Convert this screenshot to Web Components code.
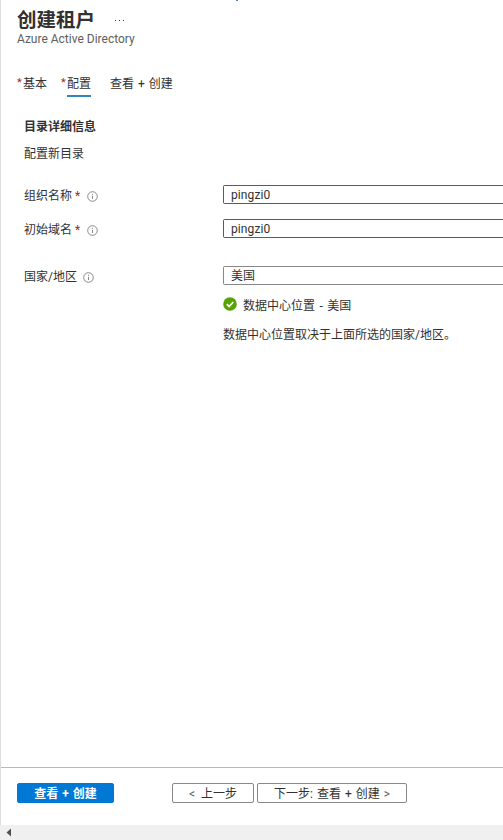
<!DOCTYPE html>
<html lang="zh">
<head>
<meta charset="utf-8">
<title>创建租户</title>
<style>
  html, body { margin: 0; height: 100%; overflow: hidden; background: #fff; }
  body { font-family: Roboto, "Noto Sans CJK SC", sans-serif; color: #323130; }
</style>
</head>
<body>
<tenant-page>
  <blade-header slot="header" title="创建租户" subtitle="Azure Active Directory"></blade-header>
  <wizard-tabs slot="header"></wizard-tabs>
  <section-text slot="body" heading="目录详细信息" text="配置新目录"></section-text>
  <form-row slot="body" label="组织名称" required value="pingzi0" icon-gap="7"></form-row>
  <form-row slot="body" label="初始域名" required value="pingzi0" icon-gap="7"></form-row>
  <form-row slot="body" label="国家/地区" value="美国" kind="select" icon-gap="6"></form-row>
  <location-note slot="body" status="数据中心位置 - 美国" note="数据中心位置取决于上面所选的国家/地区。"></location-note>
  <footer-bar slot="footer"></footer-bar>
</tenant-page>

<script>
const FONT = `Roboto, "Noto Sans CJK SC", sans-serif`;

class TenantPage extends HTMLElement {
  constructor() {
    super();
    this.attachShadow({ mode: 'open' });
  }
  connectedCallback() {
    this.shadowRoot.innerHTML = `
      <style>
        :host { display: flex; flex-direction: column; position: relative; width: 503px; height: 840px; overflow: hidden; font-family: ${FONT}; }
        .content { flex: 1; min-height: 0; display: flex; flex-direction: column; border-left: 1px solid #dcdcdc; padding-left: 16px; overflow: hidden; }
        .body { padding-left: 7px; }
        .speck { position: absolute; left: 236px; top: 0; width: 2px; height: 1px; background: #5a7fb0; }
        .bar { height: 15px; flex: none; background: #f0f0f0; display: flex; align-items: center; padding-left: 6px; }
        .bar svg { display: block; }
      </style>
      <div class="speck"></div>
      <div class="content">
        <slot name="header"></slot>
        <div class="body"><slot name="body"></slot></div>
        <div style="flex:1"></div>
        <slot name="footer"></slot>
      </div>
      <div class="bar"><svg width="6" height="9" viewBox="0 0 6 9"><path d="M5 0.5v8L0.5 4.5z" fill="#505050"/></svg></div>
    `;
  }
}
customElements.define('tenant-page', TenantPage);

class BladeHeader extends HTMLElement {
  constructor() {
    super();
    this.attachShadow({ mode: 'open' });
  }
  connectedCallback() {
    this.shadowRoot.innerHTML = `
      <style>
        :host { display: block; padding-top: 10px; }
        .top { display: flex; align-items: center; height: 22px; }
        h1 { margin: 0; font-size: 19.5px; line-height: 22px; font-weight: 700; color: #323130; }
        .dots { display: flex; gap: 3px; margin-left: 20px; position: relative; top: -1px; }
        .dots i { width: 1px; height: 1px; background: #323130; display: block; }
        .sub { font-size: 12px; line-height: 12px; margin-top: 1px; color: #605e5c; }
      </style>
      <div class="top"><h1>${this.getAttribute('title')}</h1><span class="dots"><i></i><i></i><i></i></span></div>
      <div class="sub">${this.getAttribute('subtitle')}</div>
    `;
  }
}
customElements.define('blade-header', BladeHeader);

class WizardTabs extends HTMLElement {
  constructor() {
    super();
    this.attachShadow({ mode: 'open' });
  }
  connectedCallback() {
    this.shadowRoot.innerHTML = `
      <style>
        :host { display: flex; margin-top: 30px; font-size: 12px; color: #323130; height: 29px; }
        .tab { display: flex; align-items: flex-start; line-height: 18px; margin-right: 13px; }
        .tab.second { margin-left: 1px; }
        .tab.last { margin-left: 6px; word-spacing: 1px; }
        .star { color: #a4262c; font-size: 11px; width: 6px; line-height: 16px; }
        .label { height: 18px; }
        .on { border-bottom: 2px solid #2b88b8; padding-bottom: 2px; }
      </style>
      <div class="tab"><span class="star">*</span><span class="label">基本</span></div>
      <div class="tab second"><span class="star">*</span><span class="label on">配置</span></div>
      <div class="tab last"><span class="label">查看 + 创建</span></div>
    `;
  }
}
customElements.define('wizard-tabs', WizardTabs);

class SectionText extends HTMLElement {
  constructor() {
    super();
    this.attachShadow({ mode: 'open' });
  }
  connectedCallback() {
    this.shadowRoot.innerHTML = `
      <style>
        :host { display: block; font-size: 12px; line-height: 18px; margin-top: 14px; margin-bottom: 22px; color: #323130; }
        h2 { margin: 0 0 9px; font-size: 12px; line-height: 18px; font-weight: 700; }
      </style>
      <h2>${this.getAttribute('heading')}</h2>
      <div>${this.getAttribute('text')}</div>
    `;
  }
}
customElements.define('section-text', SectionText);

class FormRow extends HTMLElement {
  constructor() {
    super();
    this.attachShadow({ mode: 'open' });
  }
  connectedCallback() {
    const required = this.hasAttribute('required');
    const iconGap = this.getAttribute('icon-gap') || 8;
    this.shadowRoot.innerHTML = `
      <style>
        :host { display: grid; grid-template-columns: 199px 300px; height: 19px; margin-bottom: 15px; font-size: 12px; color: #323130; }
        :host([kind="select"]) { margin-top: 28px; margin-bottom: 0; }
        .lab { display: flex; align-items: center; line-height: 18px; padding-top: 2px; height: 18px; }
        .star { color: #a4262c; margin-left: 3px; }
        svg { margin-left: ${iconGap}px; flex: none; }
        .field { box-sizing: border-box; height: 19px; background: #803a98; padding: 1px 0 1px 1px; border-radius: 2px 0 0 2px; }
        :host([kind="select"]) .field { background: #8a8886; }
        .inner { height: 17px; background: #fff; padding: 1px 0 0 7px; box-sizing: border-box; line-height: 16px; white-space: nowrap; letter-spacing: 0.1px; }
      </style>
      <div class="lab"><span>${this.getAttribute('label')}</span>${required ? '<span class="star">*</span>' : ''}
        <svg width="11" height="11" viewBox="0 0 11 11"><circle cx="5.5" cy="5.5" r="4.8" fill="none" stroke="#8a8886"/><path d="M5.5 4.8v3.2M5.5 2.8v1" stroke="#8a8886" fill="none"/></svg>
      </div>
      <div class="field"><div class="inner">${this.getAttribute('value')}</div></div>
    `;
  }
}
customElements.define('form-row', FormRow);

class LocationNote extends HTMLElement {
  constructor() {
    super();
    this.attachShadow({ mode: 'open' });
  }
  connectedCallback() {
    this.shadowRoot.innerHTML = `
      <style>
        :host { display: block; margin-left: 199px; margin-top: 12px; font-size: 12px; line-height: 18px; color: #323130; }
        .status { display: flex; align-items: center; gap: 6px; height: 18px; word-spacing: 1.5px; }
        svg { flex: none; position: relative; top: -2px; }
        p { margin: 11px 0 0; white-space: nowrap; }
      </style>
      <div class="status">
        <svg width="14" height="14" viewBox="0 0 14 14"><circle cx="7" cy="7" r="6.8" fill="#57a300"/><path d="M3.8 7.2l2.3 2.2 4.2-4.4" fill="none" stroke="#fff" stroke-width="1.8"/></svg>
        <span>${this.getAttribute('status')}</span>
      </div>
      <p>${this.getAttribute('note')}</p>
    `;
  }
}
customElements.define('location-note', LocationNote);

class FooterBar extends HTMLElement {
  constructor() {
    super();
    this.attachShadow({ mode: 'open' });
  }
  connectedCallback() {
    this.shadowRoot.innerHTML = `
      <style>
        :host { display: flex; align-items: flex-start; height: 58px; box-sizing: border-box; margin-left: -16px; padding: 15px 0 0 16px; border-top: 1px solid #b8b8b8; font-size: 12px; word-spacing: 1px; }
        button { box-sizing: border-box; height: 20px; padding: 2px 0 0; font: inherit; word-spacing: inherit; line-height: 16px; border-radius: 2px; white-space: nowrap; }
        .primary { width: 97px; background: #0078d4; border: 1px solid #0078d4; color: #fff; font-weight: 700; margin-right: 58px; }
        .plain { background: #fff; border: 1px solid #8a8886; color: #323130; }
        .back { width: 82px; margin-right: 3px; word-spacing: 3px; }
        .next { width: 150px; }
        .arrow { color: #605e5c; }
      </style>
      <button class="primary">查看 + 创建</button>
      <button class="plain back"><span class="arrow">&lt;</span> 上一步</button>
      <button class="plain next">下一步: 查看 + 创建 <span class="arrow">&gt;</span></button>
    `;
  }
}
customElements.define('footer-bar', FooterBar);
</script>
</body>
</html>
